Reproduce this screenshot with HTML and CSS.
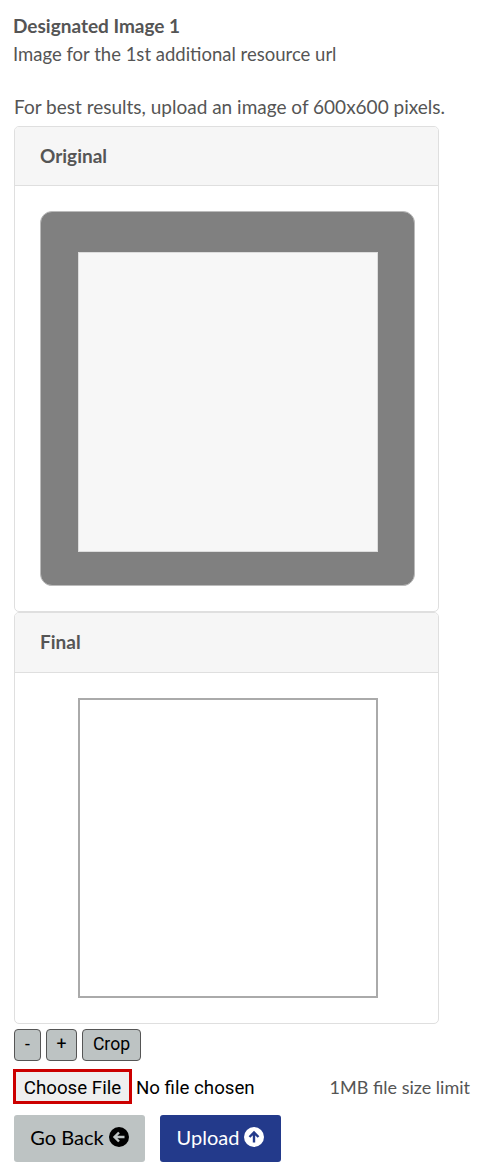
FILE: index.html
```html
<!DOCTYPE html>
<html lang="en">
<head>
    <meta charset="UTF-8">
    <meta name="viewport" content="width=device-width, initial-scale=1.0">
    <title>Designated Image</title>
    <link rel="stylesheet" href="styles.css">
</head>
<body>

<div class="container">
    <h1 class="field-title">Designated Image 1</h1>
    <p class="field-desc">Image for the 1st additional resource url</p>
    <p class="field-hint">For best results, upload an image of 600x600 pixels.</p>

    <!-- Original -->
    <div class="card">
        <div class="card-header">Original</div>
        <div class="card-body">
            <div class="crop-stage">
                <div class="crop-area"></div>
            </div>
        </div>
    </div>

    <!-- Final -->
    <div class="card">
        <div class="card-header final">Final</div>
        <div class="card-body">
            <div class="final-preview"></div>
        </div>
    </div>

    <!-- Crop controls -->
    <div class="crop-controls">
        <button class="crop-btn minus">-</button>
        <button class="crop-btn plus">+</button>
        <button class="crop-btn crop">Crop</button>
    </div>

    <!-- File row -->
    <div class="file-row">
        <label class="file-label">
            <span class="file-button">Choose File</span>
            <span class="file-name">No file chosen</span>
        </label>
        <span class="file-limit">1MB file size limit</span>
    </div>

    <!-- Actions -->
    <div class="actions">
        <button class="action-btn back">
            Go Back
            <svg class="action-icon" viewBox="0 0 20 20">
                <circle cx="10" cy="10" r="10" fill="#000"/>
                <path d="M15.5 10H5.5M10 5.5L5.5 10L10 14.5" fill="none" stroke="#bdc3c3" stroke-width="2.4"/>
            </svg>
        </button>
        <button class="action-btn upload">
            Upload
            <svg class="action-icon" viewBox="0 0 20 20">
                <circle cx="10" cy="10" r="10" fill="#fff"/>
                <path d="M10 15.5V5.5M5.5 10L10 5.5L14.5 10" fill="none" stroke="#233a8b" stroke-width="2.4"/>
            </svg>
        </button>
    </div>
</div>

</body>
</html>
```

FILE: styles.css
```css
/* Basic styling */
body { margin: 0; background-color: #fff; color: #555; font-family: Lato, "Open Sans", sans-serif; font-size: 19px; }
.container { padding: 15px 0 0 14px; }

/* Field text */
.field-title { margin: 0 0 0 -1px; font-size: 19px; line-height: 21px; font-weight: 700; color: #555; }
.field-desc { margin: 7px 0 0 -1px; font-size: 18.5px; line-height: 22px; }
.field-hint { margin: 31px 0 0; line-height: 22px; white-space: nowrap; }

/* Cards */
.card {
    box-sizing: border-box;
    width: 425px;
    background-color: #fff;
    border: 1px solid #dfdfdf;
    border-radius: 5px;
    overflow: hidden;
}
.field-hint + .card { margin-top: 8px; }
.card-header {
    height: 58px;
    padding-left: 25px;
    background-color: #f6f6f6;
    border-bottom: 1px solid #dfdfdf;
    font-weight: 700;
    line-height: 58px;
}
.card-header.final { height: 59px; }
.card-body { padding: 25px; }

/* Original image stage */
.crop-stage {
    box-sizing: border-box;
    width: 375px;
    height: 375px;
    padding: 40px 0 0 37px;
    background-color: #808080;
    border: 1px solid #bbb;
    border-radius: 12px;
}
.crop-area { width: 300px; height: 300px; background-color: #f7f7f7; border: 1px solid #ddd; box-sizing: border-box; }

/* Final image */
.final-preview {
    box-sizing: border-box;
    width: 300px;
    height: 300px;
    margin-left: 38px;
    border: 2px solid #aaa;
}

/* Crop controls */
.crop-controls { display: flex; gap: 5px; margin-top: 5px; }
.crop-btn {
    height: 32px;
    padding: 0 0 2px;
    background-color: #bdc3c3;
    color: #000;
    border: 1px solid #555;
    border-radius: 4px;
    font-family: Roboto, sans-serif;
    font-size: 17.6px;
}
.crop-btn.minus { width: 27px; }
.crop-btn.plus { width: 31px; }
.crop-btn.crop { width: 59px; }

/* File row */
.file-row { display: flex; align-items: center; margin: 8px 0 0 -1px; width: 457px; justify-content: space-between; }
.file-label { display: flex; align-items: center; color: #000; font-family: Roboto, sans-serif; font-size: 18.7px; }
.file-button {
    box-sizing: border-box;
    width: 119px;
    height: 35px;
    line-height: 32px;
    text-align: center;
    background-color: #efefef;
    border: 3px solid #cc0000;
}
.file-name { margin: 2px 0 0 4px; }
.file-limit { color: #555; font-size: 18px; }

/* Actions */
.actions { display: flex; gap: 15px; margin-top: 11px; }
.action-btn {
    display: flex;
    align-items: center;
    justify-content: center;
    gap: 5px;
    height: 47px;
    padding: 0 0 3px;
    border: none;
    border-radius: 3px;
    font-family: Lato, sans-serif;
    font-size: 20px;
}
.action-btn.back { width: 131px; background-color: #bdc3c3; color: #000; }
.action-btn.upload { width: 121px; background-color: #233a8b; color: #fff; }
.action-icon { width: 20px; height: 20px; }
```
